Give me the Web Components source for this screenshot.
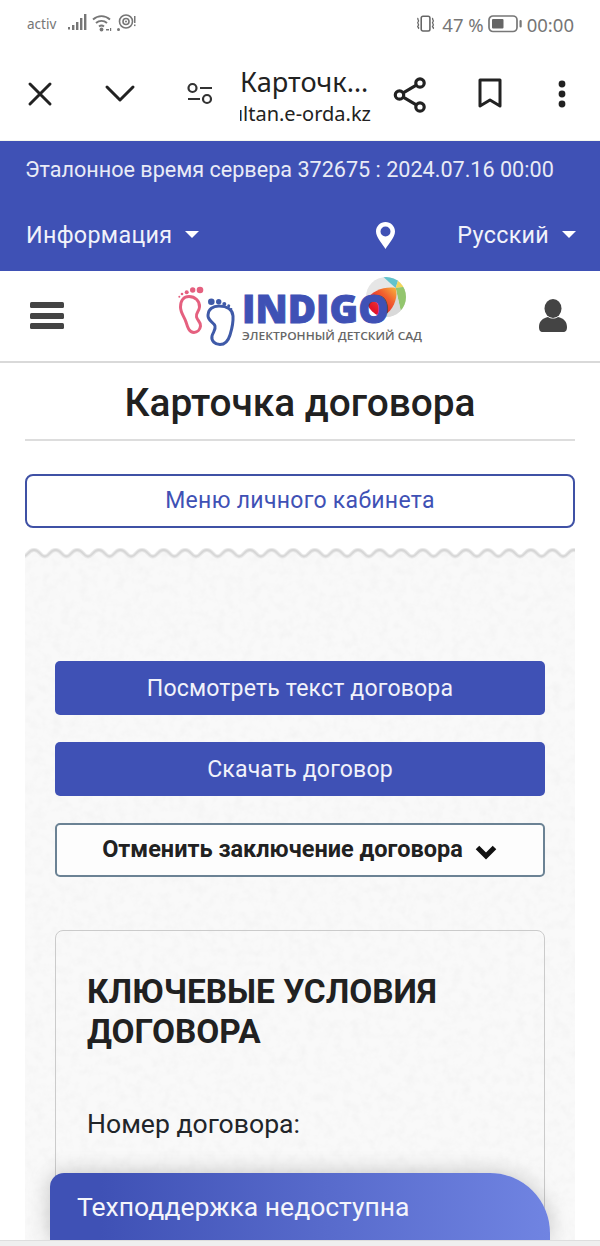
<!DOCTYPE html>
<html lang="ru">
<head>
<meta charset="utf-8">
<title>Карточка договора</title>
<style>
  html, body { margin: 0; padding: 0; background: #fff; }
  body { width: 600px; height: 1246px; overflow: hidden; position: relative; font-family: Roboto, "Liberation Sans", sans-serif; color: #212529; }
</style>
</head>
<body>
<phone-status></phone-status>
<browser-bar></browser-bar>
<info-bar></info-bar>
<site-header></site-header>
<page-title>Карточка договора</page-title>
<menu-button>Меню личного кабинета</menu-button>
<contract-panel>
  <action-button>Посмотреть текст договора</action-button>
  <action-button>Скачать договор</action-button>
  <cancel-toggle>Отменить заключение договора</cancel-toggle>
  <terms-card heading="КЛЮЧЕВЫЕ УСЛОВИЯ ДОГОВОРА">Номер договора:</terms-card>
</contract-panel>
<support-tab>Техподдержка недоступна</support-tab>

<script>
function define(name, html) {
  customElements.define(name, class extends HTMLElement {
    constructor() {
      super();
      this.attachShadow({ mode: 'open' }).innerHTML = typeof html === 'function' ? html(this) : html;
    }
  });
}

define('phone-status', `
<style>
  :host { display: flex; align-items: center; height: 48px; padding: 0 26px 0 27px; color: #767676; font-family: "Noto Sans", sans-serif; }
  .activ { font-size: 13.5px; margin-right: 12px; }
  .spacer { flex: 1; }
  .pct { font-size: 18.5px; margin: 0 4px 0 6px; }
  .time { font-size: 18.5px; margin-left: 5px; }
  svg { display: block; flex-shrink: 0; }
</style>
<span class="activ">activ</span>
<svg width="68" height="20" viewBox="0 0 68 20" fill="#767676">
  <rect x="0" y="13" width="2" height="2.500"/><rect x="4" y="11" width="2.400" height="5"/><rect x="8" y="8" width="2.400" height="8"/><rect x="12" y="4" width="2.400" height="12"/><rect x="16" y="0" width="2.400" height="16"/>
  <g fill="none" stroke="#767676" stroke-width="1.900"><path d="M25 5.500c5-4.500 12-4.500 17 0"/><path d="M28 9c3.200-2.800 7.800-2.800 11 0"/><path d="M31 12.500c1.500-1.200 3.500-1.200 5 0"/></g>
  <circle cx="33.500" cy="15.500" r="1.900"/><path d="M38 15h3v1.500h-3zM42 14h1.200v3H42z"/>
  <g fill="none" stroke="#767676" stroke-width="1.600"><circle cx="58" cy="7.500" r="6.500"/><circle cx="58" cy="7.500" r="3"/></g>
  <circle cx="58" cy="7.500" r="1"/><circle cx="50.500" cy="15.500" r="1.500"/><rect x="66" y="2" width="1.500" height="7"/><rect x="66" y="10.500" width="1.500" height="1.600"/>
</svg>
<span class="spacer"></span>
<svg width="20" height="20" viewBox="0 0 23 20" fill="none" stroke="#666" stroke-width="1.800">
  <rect x="6" y="1" width="10" height="17" rx="2"/><path d="M2.500 3c-2 1.500 2 3 0 4.500s2 3 0 4.500 2 2 0 3.500M19.500 3c-2 1.500 2 3 0 4.500s2 3 0 4.500 2 2 0 3.500" stroke-width="1.500"/>
</svg>
<span class="pct">47 %</span>
<svg width="34" height="18" viewBox="0 0 34 18" fill="none">
  <rect x="1" y="1" width="28" height="15.500" rx="4" stroke="#777" stroke-width="1.700"/><rect x="4" y="4" width="11.500" height="9.500" rx="1" fill="#666"/><rect x="31.500" y="5" width="2.200" height="7.500" rx="1" fill="#777"/>
</svg>
<span class="time">00:00</span>
`);

define('browser-bar', `
<style>
  :host { display: block; height: 93px; box-sizing: border-box; color: #222; border-bottom: 1px solid #f4f6ee; position: relative; }
  svg { display: block; position: absolute; }
  .t { position: absolute; left: 240px; top: 19px; font: 27.200px/30px "Noto Sans", sans-serif; white-space: nowrap; }
  .clip { position: absolute; left: 240px; top: 52px; width: 131px; overflow: hidden; }
  .u { font: 20px/27px "Noto Sans", sans-serif; white-space: nowrap; float: right; }
</style>
<svg style="left:27px;top:33px" width="26" height="26" viewBox="0 0 26 26" stroke="#222" stroke-width="3" stroke-linecap="round"><path d="M3 3l20 20M23 3L3 23"/></svg>
<svg style="left:104px;top:36px" width="32" height="20" viewBox="0 0 32 20" fill="none" stroke="#222" stroke-width="3" stroke-linecap="round" stroke-linejoin="round"><path d="M3 3l13 13L29 3"/></svg>
<svg style="left:186px;top:34px" width="28" height="24" viewBox="0 0 28 24" fill="none" stroke="#333" stroke-width="2.200"><circle cx="6.500" cy="6" r="4"/><path d="M14 6h12M2 17h12"/><circle cx="21" cy="17" r="4"/></svg>
<div class="t">Карточк…</div><div class="clip"><div class="u">sultan.e-orda.kz</div></div>
<svg style="left:393px;top:29px" width="34" height="36" viewBox="0 0 34 36" fill="none" stroke="#222" stroke-width="3.200"><circle cx="27" cy="6" r="4.200"/><circle cx="6.500" cy="18" r="4.200"/><circle cx="27" cy="30" r="4.200"/><path d="M10.200 15.800L23.300 8.200M10.200 20.200l13.100 7.600"/></svg>
<svg style="left:476px;top:29px" width="28" height="32" viewBox="0 0 28 32" fill="none" stroke="#222" stroke-width="3" stroke-linejoin="round"><path d="M4 3h20v26l-10-6-10 6z"/></svg>
<svg style="left:556px;top:31px" width="12" height="30" viewBox="0 0 12 30" fill="#222"><circle cx="6" cy="5" r="3.400"/><circle cx="6" cy="15" r="3.400"/><circle cx="6" cy="25" r="3.400"/></svg>
`);

define('info-bar', `
<style>
  :host { display: block; background: #3f51b5; color: #fff; height: 130px; font-family: Roboto, sans-serif; }
  .time { font-size: 21.600px; line-height: 24px; padding: 17px 0 0 25px; color: #e9ebf6; white-space: nowrap; }
  .row { display: flex; align-items: center; font-size: 23.300px; padding: 37px 25px 0 26px; height: 32px; letter-spacing: .3px; color: #f1f2fa; }
  .caret { flex-shrink: 0; width: 0; height: 0; border: 7px solid transparent; border-top-color: #fff; border-bottom: 0; margin-left: 13px; margin-top: -2px; }
  .pin { flex-shrink: 0; margin-left: 177px; margin-right: 62px; margin-top: 1px; display: block; }
</style>
<div class="time">Эталонное время сервера 372675 : 2024.07.16 00:00</div>
<div class="row">
  <span>Информация</span><span class="caret"></span>
  <svg class="pin" width="19" height="27" viewBox="0 0 19 27"><path fill="#fff" fill-rule="evenodd" d="M9.500 0C4.300 0 0 4.200 0 9.400 0 15.500 6.500 21.500 9.500 27c3-5.500 9.500-11.500 9.500-17.600C19 4.200 14.700 0 9.500 0zm0 4.500a5 5 0 1 1 0 10 5 5 0 0 1 0-10z"/></svg>
  <span>Русский</span><span class="caret"></span>
</div>
`);

define('site-header', `
<style>
  :host { display: flex; height: 92px; box-sizing: border-box; align-items: center; justify-content: space-between; padding: 0 33px 0 30px; border-bottom: 2px solid #d9d9d9; background: #fff; }
  svg { display: block; flex-shrink: 0; }
  .logo { overflow: visible; margin-left: 6px; }
</style>
<svg width="34" height="30" viewBox="0 0 34 30" fill="#444"><rect y="1" width="34" height="6" rx="1.500"/><rect y="12" width="34" height="6" rx="1.500"/><rect y="22" width="34" height="6" rx="1.500"/></svg>
<svg class="logo" width="252" height="72" viewBox="0 0 252 72">
  <defs>
    <clipPath id="ball"><circle cx="207" cy="17" r="20"/></clipPath>
    <linearGradient id="beach" x1="1" y1="0" x2="0" y2="1"><stop offset="0" stop-color="#f8b63c"/><stop offset=".3" stop-color="#f2602f"/><stop offset=".7" stop-color="#e2152b"/></linearGradient>
  </defs>
  <path d="M1.500 27C1.500 20 5 16.500 10 16.500 16 16.500 21 21 20.500 27 20 32 16.500 33 17.500 37 18.500 41 22 42 21.500 46 21 50 18 52.500 15 52.500 10 52.500 8.500 47 7 42 5.500 37 1.500 33 1.500 27z" fill="none" stroke="#e5607f" stroke-width="3"/>
  <g fill="#e5607f"><circle cx="21" cy="10" r="3.300"/><circle cx="13.700" cy="10" r="2.700"/><circle cx="7.700" cy="12.300" r="2"/><circle cx="3" cy="14" r="1.300"/><circle cx=".3" cy="16.700" r="1"/></g>
  <path d="M29 35C29.500 29 34 26 40 26 47 26 53.500 29 54 36 54.500 44 52.500 50 51 55 49.500 60 46 64.500 41 64.500 36 64.500 32 61 33 56 34 52 37 50 36 46 35 42 28.500 41 29 35z" fill="none" stroke="#3f5aa8" stroke-width="3"/>
  <g fill="#3f5aa8"><circle cx="32.300" cy="21.700" r="3.300"/><circle cx="39.700" cy="21.700" r="2.700"/><circle cx="45.300" cy="24" r="2"/><circle cx="49.700" cy="25.700" r="1.500"/><circle cx="52.300" cy="29" r="1.100"/></g>
  <g clip-path="url(#ball)">
    <rect x="184" y="-6" width="46" height="46" fill="#e6e6e6"/>
    <path d="M216.700 8L201-6h20z" fill="#62c3cc"/>
    <path d="M216.700 8L221-6l15 11z" fill="#f1d65c"/>
    <path d="M216.700 8L236 5v30l-14-3z" fill="#93c66e"/>
    <path d="M216.700 8L222 32l-8 10-16-2z" fill="#d9d9d9"/>
    <path d="M216.700 8C204 6 190 12 185 24L200 38C212 34 220 20 216.700 8z" fill="url(#beach)"/>
  </g>
  <text x="63" y="43" font-size="39.500" font-weight="800" fill="#3f51b5" stroke="#3f51b5" stroke-width=".9" textLength="147" lengthAdjust="spacingAndGlyphs" style="font-family:'Open Sans',sans-serif">INDIGO</text>
  <text x="63" y="60" font-size="11.500" font-weight="600" fill="#666" textLength="180" lengthAdjust="spacingAndGlyphs" style="font-family:'Open Sans',sans-serif">ЭЛЕКТРОННЫЙ ДЕТСКИЙ САД</text>
</svg>
<svg width="28" height="34" viewBox="0 0 28 34" fill="#444"><ellipse cx="14" cy="9.500" rx="8.500" ry="9.500"/><path d="M0 28c0-6 4-9 9-10 3 2 7 2 10 0 5 1 9 4 9 10 0 3-1 5-4 5H4c-3 0-4-2-4-5z"/></svg>
`);

define('page-title', `
<style>
  :host { display: block; margin: 0 25px; height: 78px; box-sizing: border-box; border-bottom: 2px solid #ddd; text-align: center; font: 500 38.800px/80px Roboto, sans-serif; color: #212121; white-space: nowrap; }
</style>
<slot></slot>
`);

define('menu-button', `
<style>
  :host { display: flex; align-items: center; justify-content: center; margin: 33px 25px 0; height: 54px; box-sizing: border-box; border: 2px solid #3f51a5; border-radius: 8px; padding-bottom: 2px; color: #3f51b5; font: 400 23px Roboto, sans-serif; background: #fff; letter-spacing: .3px; }
</style>
<slot></slot>
`);

define('contract-panel', `
<style>
  :host { display: block; position: relative; margin: 20px 25px 0; height: 700px; background: #f9f9f9; overflow: hidden; }
  .paper { position: absolute; left: 0; top: 0; width: 100%; height: 100%; }
  .edge { position: absolute; left: 0; top: 0; width: 100%; height: 12px; display: block; }
  .body { position: relative; padding: 113px 30px 0; display: flex; flex-direction: column; }
</style>
<svg class="paper" xmlns="http://www.w3.org/2000/svg">
  <filter id="grain" x="0" y="0" width="100%" height="100%">
    <feTurbulence type="fractalNoise" baseFrequency=".11" numOctaves="3" seed="4"/>
    <feColorMatrix values="0 0 0 0 .75  0 0 0 0 .75  0 0 0 0 .75  .28 .28 0 0 -.24"/>
  </filter>
  <rect width="100%" height="100%" filter="url(#grain)"/>
</svg>
<svg class="edge" viewBox="0 0 550 12" preserveAspectRatio="none">
  <defs>
    <pattern id="wave" width="21.600" height="12" patternUnits="userSpaceOnUse" x="9">
      <path d="M0 2C6 2 6 8.500 10.800 8.500 15.600 8.500 15.600 2 21.600 2V0H0z" fill="#fff"/>
      <path d="M0 2C6 2 6 8.500 10.800 8.500 15.600 8.500 15.600 2 21.600 2" fill="none" stroke="#e8e8e8" stroke-width="4"/>
      <path d="M0 2C6 2 6 8.500 10.800 8.500 15.600 8.500 15.600 2 21.600 2" fill="none" stroke="#d6d6d6" stroke-width="1.800"/>
    </pattern>
  </defs>
  <rect width="550" height="12" fill="url(#wave)"/>
</svg>
<div class="body"><slot></slot></div>
`);

define('action-button', `
<style>
  :host { display: flex; align-items: center; justify-content: center; height: 54px; box-sizing: border-box; margin-bottom: 27px; background: #3f51b5; color: #f1f2fa; border-radius: 5px; font: 400 23.100px Roboto, sans-serif; letter-spacing: .15px; }
</style>
<slot></slot>
`);

define('cancel-toggle', `
<style>
  :host { display: flex; align-items: center; justify-content: center; height: 54px; padding-bottom: 2px; box-sizing: border-box; border: 2px solid #6b8294; border-radius: 5px; background: #fdfdfd; color: #212121; font: 700 23.500px Roboto, sans-serif; }
  svg { margin-left: 11px; margin-top: 5px; display: block; flex-shrink: 0; }
</style>
<slot></slot>
<svg width="24" height="16" viewBox="0 0 24 16"><path d="M3.500 3.500l8.500 8.500 8.500-8.500" fill="none" stroke="#111" stroke-width="5"/></svg>
`);

define('terms-card', (el) => `
<style>
  :host { display: block; margin-top: 53px; padding: 41px 31px 0; height: 400px; box-sizing: border-box; border: 1.500px solid #cbcbcb; border-radius: 8px; }
  h2 { margin: 0; font: 700 33.400px/40px Roboto, sans-serif; color: #212121; }
  p { margin: 54px 0 0; font: 400 26.600px/36px Roboto, sans-serif; color: #212529; }
</style>
<h2>${el.getAttribute('heading')}</h2>
<p><slot></slot></p>
`);

define('support-tab', `
<style>
  :host { position: absolute; left: 50px; top: 1173px; width: 500px; height: 67px; box-sizing: border-box; padding: 17px 0 0 27px; border-radius: 14px 60px 0 0; background: linear-gradient(90deg, #3f51b5 10%, #7084e2 100%); color: #f4f5fb; font: 400 26.500px/34px Roboto, sans-serif; box-shadow: 0 0 22px rgba(0,0,0,.22); }
  .floor { position: absolute; left: -50px; top: 67px; width: 600px; height: 6px; background: #efefef; border-top: 1px solid #dedede; }
</style>
<slot></slot>
<div class="floor"></div>
`);
</script>
</body>
</html>
